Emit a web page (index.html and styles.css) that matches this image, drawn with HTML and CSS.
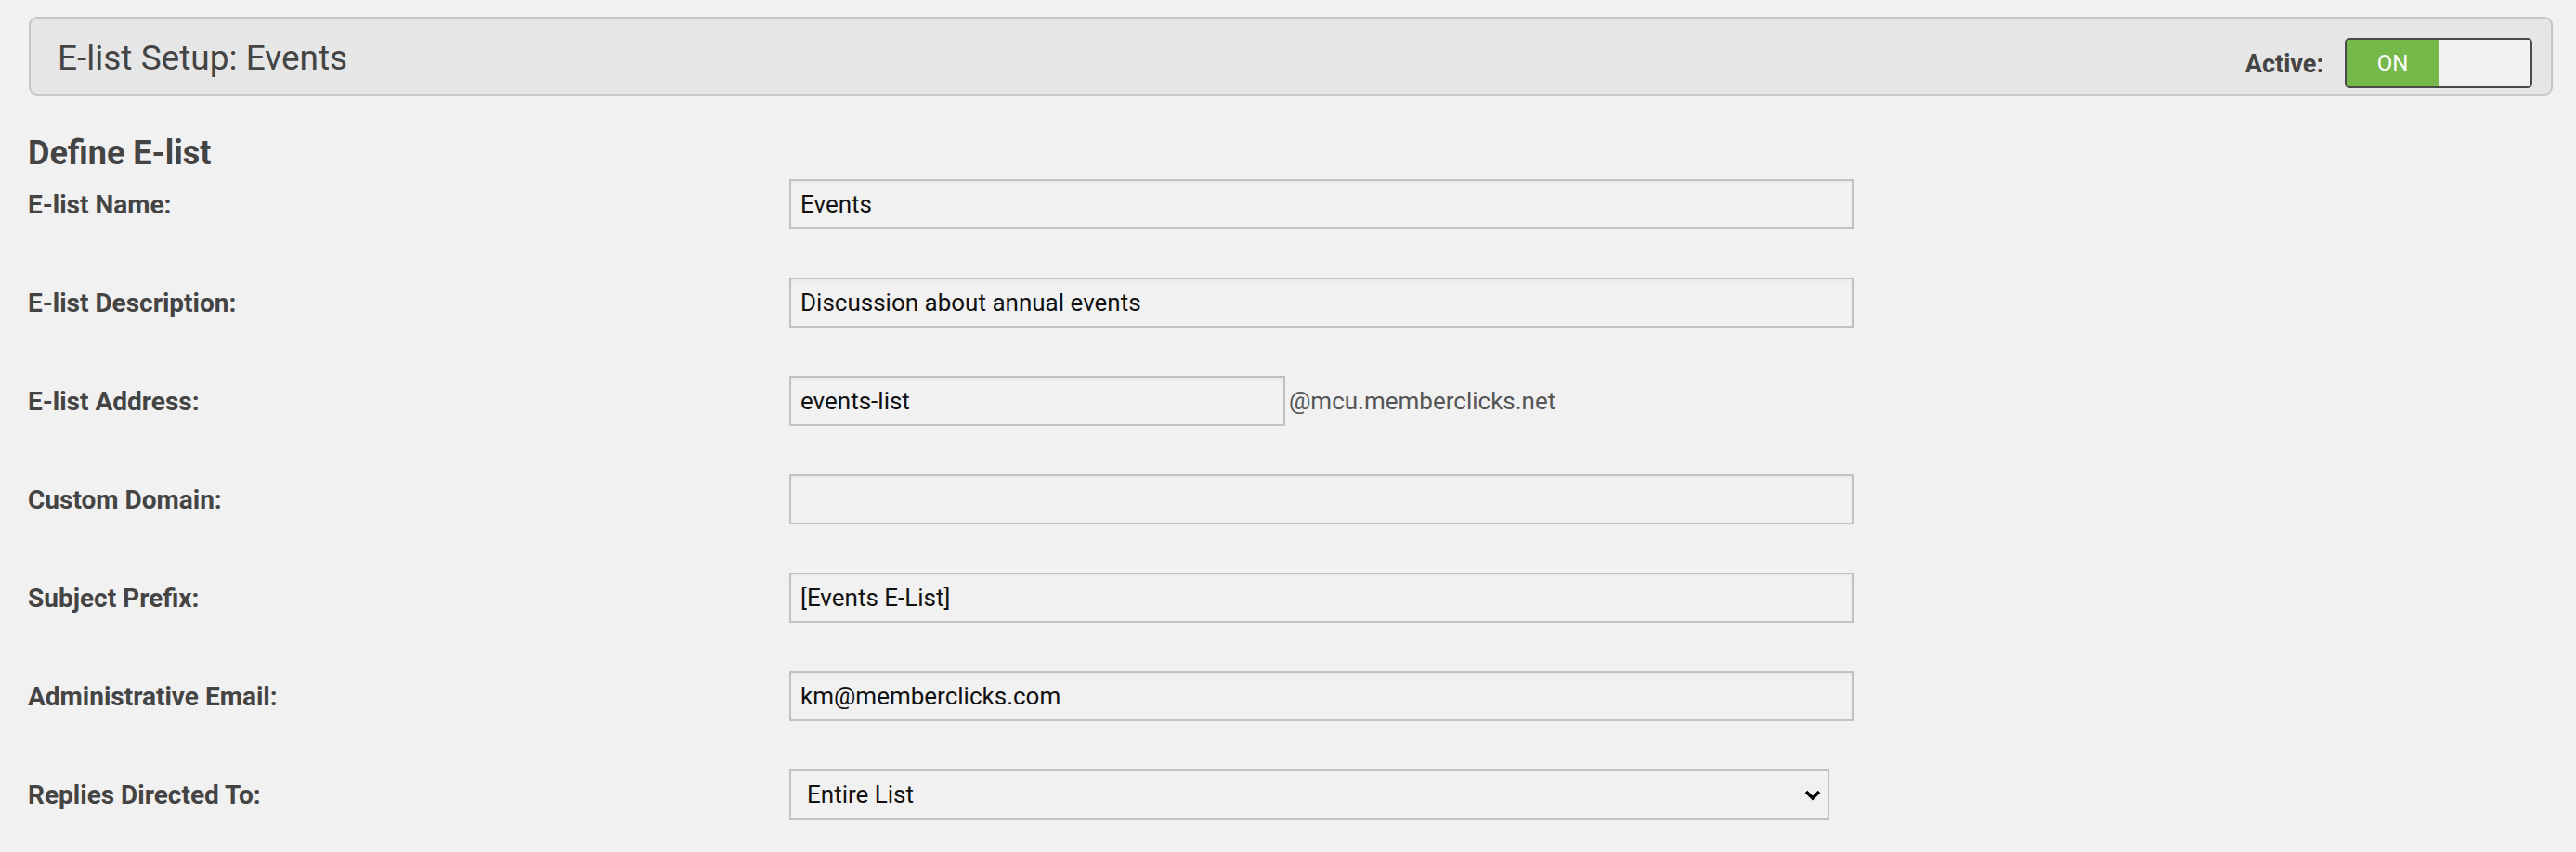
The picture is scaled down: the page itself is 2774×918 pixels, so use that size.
FILE: index.html
```html
<!DOCTYPE html>
<html lang="en">
<head>
    <meta charset="UTF-8">
    <title>E-list Setup: Events</title>
    <link rel="stylesheet" href="styles.css">
</head>
<body>
    <div class="page">
        <div class="header">
            <h2 class="header-title">E-list Setup: Events</h2>
            <div class="active">
                <span class="active-label">Active:</span>
                <div class="toggle">
                    <span class="toggle-on">ON</span>
                    <span class="toggle-off"></span>
                </div>
            </div>
        </div>

        <h3 class="section-title">Define E-list</h3>
        <div class="form">
            <label for="name">E-list Name:</label>
            <div class="field"><input type="text" id="name" value="Events"></div>

            <label for="description">E-list Description:</label>
            <div class="field"><input type="text" id="description" value="Discussion about annual events"></div>

            <label for="address">E-list Address:</label>
            <div class="field">
                <input type="text" id="address" class="short" value="events-list">
                <span class="domain">@mcu.memberclicks.net</span>
            </div>

            <label for="custom">Custom Domain:</label>
            <div class="field"><input type="text" id="custom" value=""></div>

            <label for="prefix">Subject Prefix:</label>
            <div class="field"><input type="text" id="prefix" value="[Events E-List]"></div>

            <label for="admin">Administrative Email:</label>
            <div class="field"><input type="text" id="admin" value="km@memberclicks.com"></div>

            <label for="replies">Replies Directed To:</label>
            <div class="field">
                <div class="select-wrap">
                    <select id="replies">
                        <option>Entire List</option>
                        <option>Sender</option>
                    </select>
                    <svg class="chevron" width="18" height="12" viewBox="0 0 18 12">
                        <path d="M2 2 L9 9 L16 2" fill="none" stroke="#000" stroke-width="3.6"/>
                    </svg>
                </div>
            </div>
        </div>
    </div>
</body>
</html>
```

FILE: styles.css
```css
body {
    margin: 0;
    background-color: #f1f1f1;
    font-family: Roboto, "Liberation Sans", Arial, sans-serif;
    color: #444;
}
.page {
    padding: 18px 25px 0 31px;
}
.header {
    display: flex;
    justify-content: space-between;
    align-items: center;
    height: 81px;
    padding: 0 20px 0 29px;
    background-color: #e6e6e6;
    border: 2px solid #c6c6c6;
    border-radius: 9px;
}
.header-title {
    margin: 4px 0 0 0;
    font-size: 37px;
    font-weight: normal;
    color: #444;
}
.active {
    display: flex;
    align-items: center;
    gap: 23px;
    margin-top: 14px;
}
.active-label {
    font-size: 27px;
    font-weight: bold;
    color: #444;
    margin-top: 2px;
}
.toggle {
    display: flex;
    width: 198px;
    height: 50px;
    border: 2px solid #4a4a4a;
    border-radius: 5px;
    overflow: hidden;
}
.toggle-on {
    flex: 1;
    display: flex;
    align-items: center;
    justify-content: center;
    background-color: #77b84b;
    color: #fff;
    font-size: 24px;
}
.toggle-off {
    flex: 1;
    background-color: #f2f2f2;
}
.section-title {
    margin: 41px 0 6px -1px;
    font-size: 36px;
    line-height: 43px;
    font-weight: bold;
    color: #444;
}
.form {
    display: grid;
    grid-template-columns: 819px 1146px;
    row-gap: 52px;
    align-items: center;
}
.form label {
    font-size: 28px;
    font-weight: bold;
    color: #444;
    margin-left: -1px;
}
.field {
    display: flex;
    align-items: center;
}
input {
    box-sizing: border-box;
    width: 1146px;
    height: 54px;
    padding: 0 10px;
    border: 2px solid #c1c1c1;
    border-radius: 0;
    background-color: #f1f1f1;
    box-shadow: inset 0 2px 2px rgba(0, 0, 0, 0.03);
    font-family: Roboto, "Liberation Sans", Arial, sans-serif;
    font-size: 26px;
    color: #111;
}
input.short {
    width: 534px;
}
.domain {
    margin-left: 4px;
    font-size: 26px;
    color: #555;
}
.select-wrap {
    position: relative;
    width: 1120px;
}
select {
    box-sizing: border-box;
    width: 1120px;
    height: 54px;
    padding: 0 17px;
    border: 2px solid #c1c1c1;
    border-radius: 0;
    background-color: #f1f1f1;
    appearance: none;
    font-family: Roboto, "Liberation Sans", Arial, sans-serif;
    font-size: 26px;
    color: #111;
}
.chevron {
    position: absolute;
    right: 9px;
    top: 22px;
    pointer-events: none;
}
```
